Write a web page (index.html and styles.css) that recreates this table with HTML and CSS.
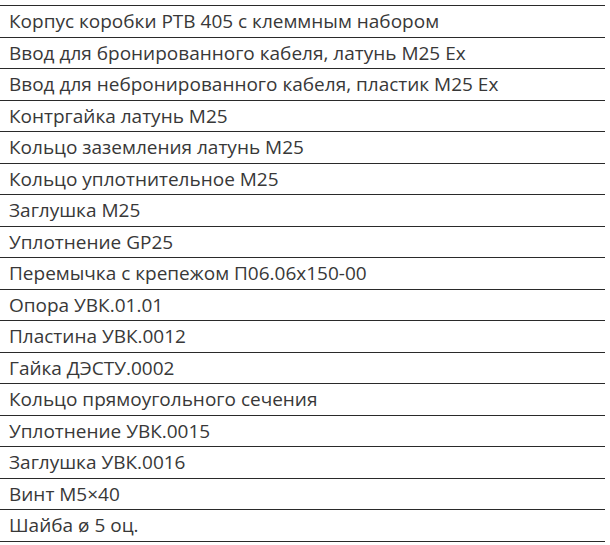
FILE: index.html
```html
<!DOCTYPE html>
<html lang="ru">
<head>
<meta charset="utf-8">
<link rel="stylesheet" href="styles.css">
</head>
<body>
<div class="list">
  <div class="row">Корпус коробки РТВ 405 с клеммным набором</div>
  <div class="row">Ввод для бронированного кабеля, латунь М25 Ex</div>
  <div class="row">Ввод для небронированного кабеля, пластик М25 Ex</div>
  <div class="row">Контргайка латунь М25</div>
  <div class="row">Кольцо заземления латунь М25</div>
  <div class="row">Кольцо уплотнительное М25</div>
  <div class="row">Заглушка М25</div>
  <div class="row">Уплотнение GP25</div>
  <div class="row">Перемычка с крепежом П06.06х150-00</div>
  <div class="row">Опора УВК.01.01</div>
  <div class="row">Пластина УВК.0012</div>
  <div class="row">Гайка ДЭСТУ.0002</div>
  <div class="row">Кольцо прямоугольного сечения</div>
  <div class="row">Уплотнение УВК.0015</div>
  <div class="row">Заглушка УВК.0016</div>
  <div class="row">Винт М5×40</div>
  <div class="row">Шайба ø 5 оц.</div>
</div>
</body>
</html>
```
FILE: styles.css
```css
html, body {
  margin: 0;
  padding: 0;
  background: #ffffff;
}
.list {
  width: 605px;
  margin-top: 5px;
  border-bottom: 1px solid #2a2a2a;
  font-family: "Open Sans", "Noto Sans", sans-serif;
  font-size: 19px;
  font-weight: 400;
  color: #383838;
}
.row {
  box-sizing: border-box;
  height: 31.53px;
  border-top: 1px solid #2a2a2a;
  padding: 3px 0 0 9px;
  line-height: 25px;
  white-space: nowrap;
}
```
